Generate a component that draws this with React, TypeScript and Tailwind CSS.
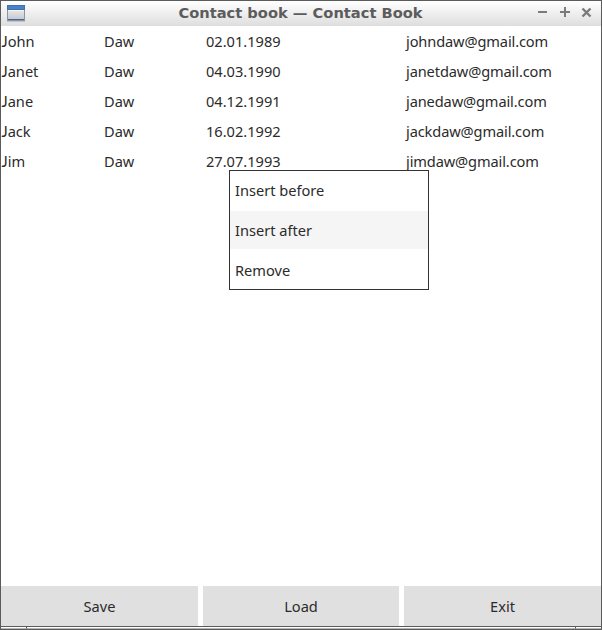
const firstNames = ["John", "Janet", "Jane", "Jack", "Jim"];
const dates = ["02.01.1989", "04.03.1990", "04.12.1991", "16.02.1992", "27.07.1993"];
const menuItems = [
  { text: "Insert before", box: "h-10" },
  { text: "Insert after", box: "h-[38px] bg-[#f5f5f5]" },
  { text: "Remove", box: "h-10 pt-0.5" },
];

function WindowIcon() {
  return (
    <svg width="18" height="17" viewBox="0 0 18 17" shapeRendering="crispEdges">
      <defs>
        <linearGradient id="pane" x1="0" y1="0" x2="0" y2="1">
          <stop offset="0" stopColor="#e8e8e8" />
          <stop offset="1" stopColor="#c9cbca" />
        </linearGradient>
      </defs>
      <rect width="18" height="16" fill="#8995a5" />
      <rect x="0" width="18" height="5" fill="#3f70b0" />
      <rect x="1" y="1" width="16" height="3" fill="#4a82c6" />
      <rect x="1" y="5" width="16" height="9" fill="url(#pane)" />
      <rect x="1" y="5" width="16" height="1" fill="#f5f5f5" />
      <rect x="1" y="14" width="16" height="1" fill="#3e68a5" />
      <rect y="16" width="18" height="1" fill="#c4c4c4" />
    </svg>
  );
}

function Controls() {
  return (
    <svg width="56" height="12" viewBox="0 0 56 12" fill="none" stroke="#7b7b7b" strokeWidth="2">
      <path d="M0 6h9M22 6h10M27 1v10" />
      <path d="M44.5 2.5l8 8M52.5 2.5l-8 8" strokeWidth="2.4" />
    </svg>
  );
}

export default function App() {
  return (
    <div className="relative flex h-[630px] w-[602px] flex-col overflow-hidden border border-[#5c5b5c] bg-white font-['Noto_Sans',sans-serif] text-[14.6px] leading-[30px] text-[#2b2b2b]">
      <header className="grid h-[25px] shrink-0 grid-cols-[100px_1fr_100px] items-start bg-linear-to-b from-white to-[#dedede]">
        <div className="pt-1 pl-1.5">
          <WindowIcon />
        </div>
        <h1 className="pr-px text-center font-['DejaVu_Sans',sans-serif] text-[14.67px] leading-[23px] font-bold whitespace-nowrap text-[#5c5c5c]">
          Contact book — Contact Book
        </h1>
        <div className="pt-[5px] pl-[37px]">
          <Controls />
        </div>
      </header>
      <main className="grow">
        {firstNames.map((name, i) => (
          <div key={name} className="grid h-[30px] grid-cols-[103px_102px_199px_1fr] whitespace-nowrap">
            <span className="block pl-[0.5px] first-letter:font-['Lato']">{name}</span>
            <span>Daw</span>
            <span>{dates[i]}</span>
            <span className="pl-px tracking-[-0.12px]">{name.toLowerCase()}daw@gmail.com</span>
          </div>
        ))}
      </main>
      <div className="grid h-10 shrink-0 grid-cols-[197px_196px_197px] gap-[5px] text-center leading-10">
        {["Save", "Load", "Exit"].map((label) => (
          <button key={label} className="bg-[#e0e0e0]">
            {label}
          </button>
        ))}
      </div>
      <footer className="flex h-[3px] shrink-0 border-t border-[#5c5b5c]">
        <div className="w-[25px] border-b border-[#b5b5b5]" />
        <div className="grow border-x border-b border-x-[#5c5b5c] border-b-[#b5b5b5]" />
        <div className="w-[25px] border-b border-[#b5b5b5]" />
      </footer>
      <div className="absolute top-[169px] left-[228px] h-[120px] w-[200px] border border-[#333] bg-white leading-[38px]">
        {menuItems.map((item) => (
          <div key={item.text} className={`${item.box} pl-[5px]`}>
            {item.text}
          </div>
        ))}
      </div>
    </div>
  );
}
